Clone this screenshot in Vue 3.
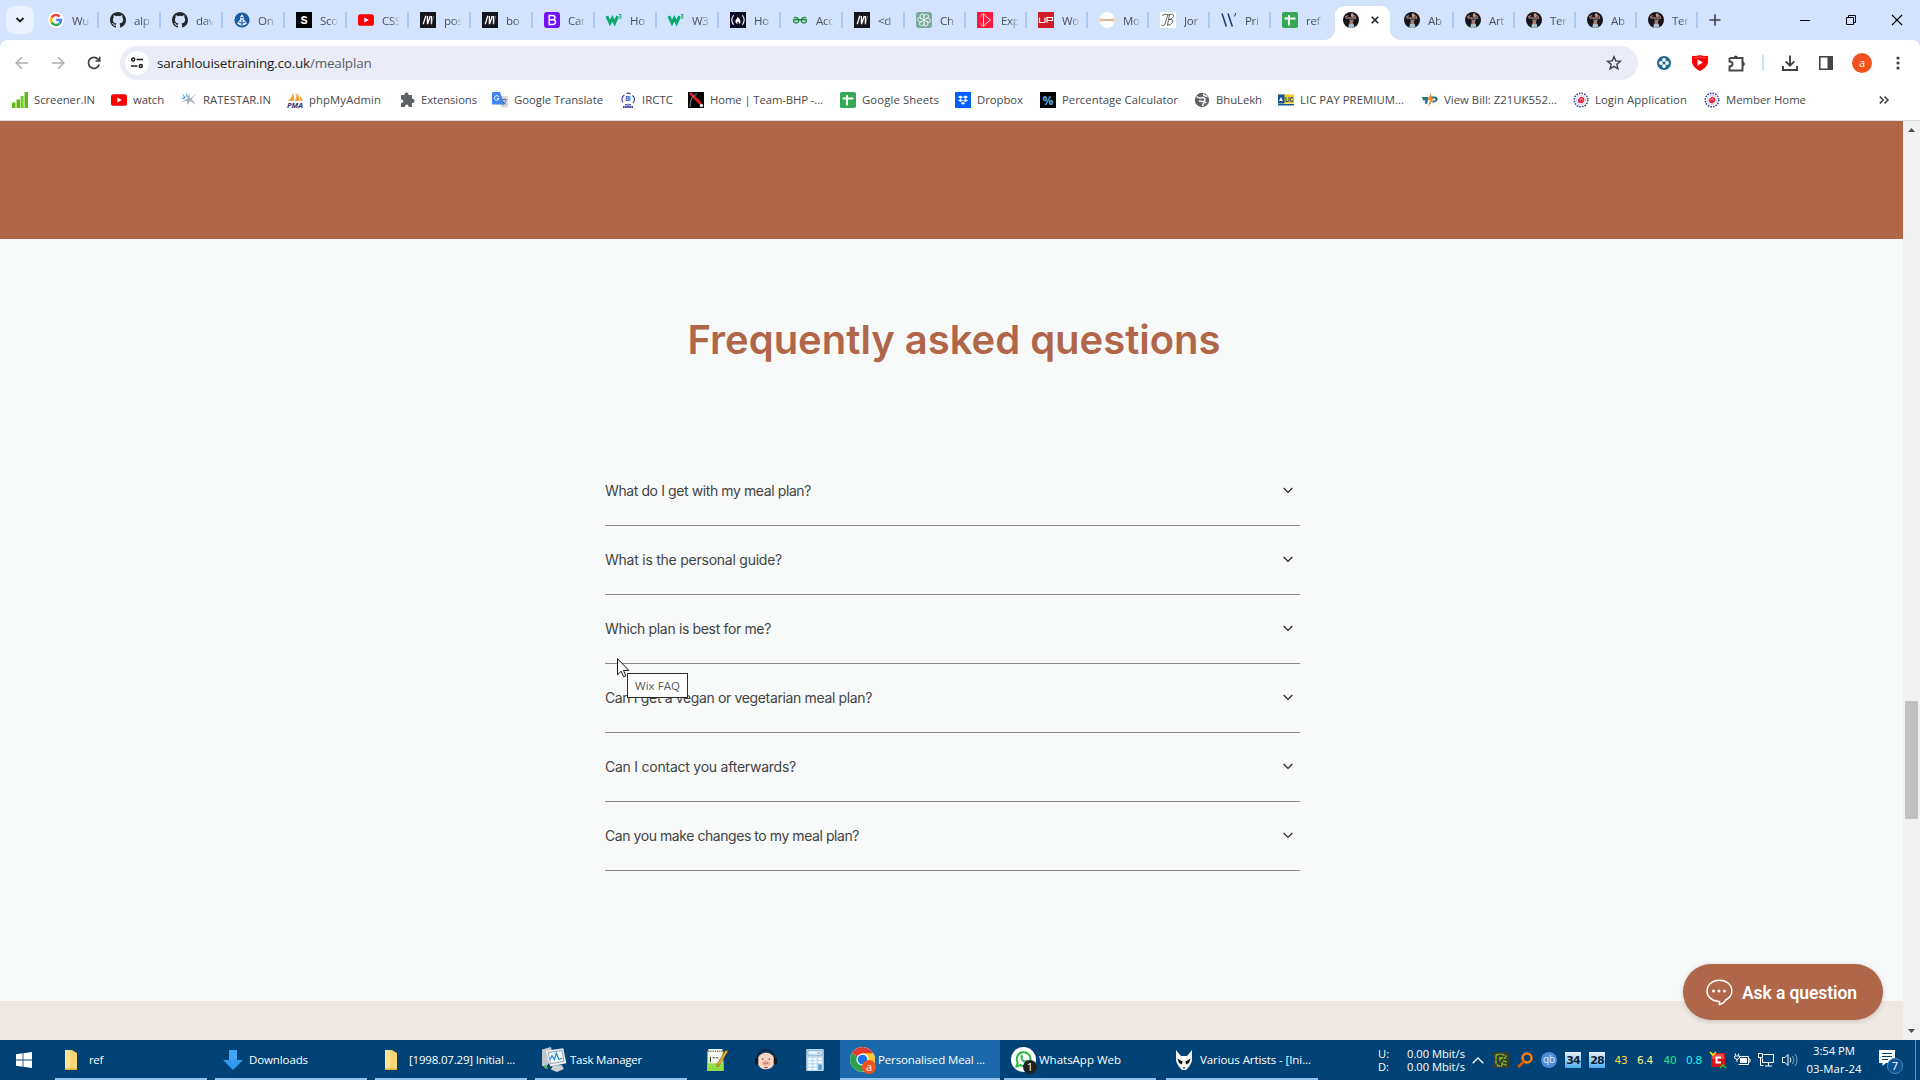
<script setup>
const petal = '<path d="M7.900 7.900V4.700q.3-2.300 2.500-2.300 2.300.2 2.500 2.500L9.900 6.700" transform="rotate(ANGLE 8 8)"/>'
const petals = [0, 60, 120, 180, 240, 300].map((a) => petal.replace('ANGLE', a)).join('')

const icons = {
  google: '<circle cx="8" cy="8" r="8" fill="#fff"/><g fill="none" stroke-width="2.5"><path d="M11.6 4.6A5 5 0 0 0 3.7 5.5" stroke="#ea4335"/><path d="M3.7 5.5a5 5 0 0 0 0 5" stroke="#fbbc05"/><path d="M3.7 10.5a5 5 0 0 0 7.6 1.2" stroke="#34a853"/><path d="M11.3 11.7A5 5 0 0 0 13 8.1H8.2" stroke="#4285f4"/></g>',
  github: '<path fill="#24292f" d="M8 0C3.58 0 0 3.58 0 8c0 3.54 2.29 6.53 5.47 7.59.4.07.55-.17.55-.38 0-.19-.01-.82-.01-1.49-2.01.37-2.53-.49-2.69-.94-.09-.23-.48-.94-.82-1.13-.28-.15-.68-.52-.01-.53.63-.01 1.08.58 1.23.82.72 1.21 1.87.87 2.33.66.07-.52.28-.87.51-1.07-1.78-.2-3.64-.89-3.64-3.95 0-.87.31-1.59.82-2.15-.08-.2-.36-1.02.08-2.12 0 0 .67-.21 2.2.82a7.6 7.6 0 0 1 4 0c1.53-1.04 2.2-.82 2.2-.82.44 1.1.16 1.92.08 2.12.51.56.82 1.27.82 2.15 0 3.07-1.87 3.75-3.65 3.95.29.25.54.73.54 1.48 0 1.07-.01 1.93-.01 2.2 0 .21.15.46.55.38A8 8 0 0 0 8 0"/>',
  octo: '<circle cx="8" cy="8" r="7.6" fill="#1a5ca0"/><path d="M8 2.300c1.800 1.500 2 3.200 1.800 5L13 11.500q-2 2-5 2t-5-2l3.200-4.200C6 5.500 6.200 3.800 8 2.300" fill="#dbe9f6"/><path d="M6.800 5.500h2.400M8 7.500v5.500M5 10.200q3 2 6 0" stroke="#1a5ca0" fill="none"/>',
  sblack: '<path fill="#000" d="M0 0h16v16H0z"/><text x="8" y="12" text-anchor="middle" font-size="11" font-weight="700" font-family="Inter,sans-serif" fill="#fff">S</text>',
  youtube: '<rect y="2.200" width="16" height="11.600" rx="2.600" fill="#f00"/><path d="M6.300 5.400v5.200L10.800 8z" fill="#fff"/>',
  mdark: '<path fill="#15141a" d="M0 0h16v16H0z"/><path d="M3.200 12.200 5.800 3.800M7.400 12.200V4M7.600 12 10.200 4M11.400 12.200V4" stroke="#fff" stroke-width="1.300" fill="none"/><path d="m11.600 12 1.900-8" stroke="#aaa" stroke-width=".7"/>',
  bootstrap: '<rect width="16" height="16" rx="3" fill="#7411f5"/><path d="M5.200 3.600h3.600a2.100 2.100 0 0 1 0 4.200H5.200zm0 4.200h4a2.300 2.300 0 0 1 0 4.600h-4z" fill="none" stroke="#fff" stroke-width="1.500"/>',
  w3: '<path d="M.8 4.200 4 11 6.300 6.300 8.600 11 11.600 4.200" fill="none" stroke="#04aa6d" stroke-width="2.900"/><path d="M12.900 2.600h2.300L13.800 4.400q1.700 0 1.500 1.200-.5 1.200-2.500.6" fill="none" stroke="#04aa6d" stroke-width=".9"/>',
  fcc: '<path fill="#0a0a23" d="M0 0h16v16H0z"/><path d="M3.600 3.200Q.1 8 3.600 12.800M12.400 3.200q3.500 4.800 0 9.600" stroke="#fff" stroke-width="1.100" fill="none"/><path d="M7.500 4.400c1 1.500 3 2.800 3 5 0 1.400-.9 2.200-1.900 2.500.5-1.100.3-1.700-.7-2.700-.5 1-.9 1.600-.4 2.700-1.500-.5-2.100-1.500-2.100-2.600 0-2.200 2.400-2.600 2.100-4.900" fill="#fff"/>',
  gfg: '<g fill="none" stroke="#2f8d46" stroke-width="1.400"><path d="M1 7.800h14M7 7.800q-.3 3.200-2.900 3.200-2.600-.2-2.600-2.700M9 7.800q.3 3.200 2.900 3.200 2.600-.2 2.600-2.700"/><path d="M1.800 6.200q1.800-2.200 5.200 1.600M14.200 6.200q-1.800-2.200-5.200 1.600"/></g>',
  gpt: '<rect width="16" height="16" rx="3" fill="#75a99a"/><g fill="none" stroke="#fff" stroke-width=".8">' + petals + '</g>',
  expo: '<path fill="#ff1a3d" d="M0 0h16v16H0z"/><path d="M6.500 2.500v11M4.500 3l1.800-1.300L8 3M4.500 13l1.800 1.300L8 13M8 3.500l5.500 4.500L8 12.500M4 3.500v1M4 11.500v1" stroke="#fff" stroke-width=".9" fill="none"/>',
  up: '<path fill="#d01c24" d="M0 0h16v16H0z"/><path d="M1.500 5.500v5H7M7 5.500v5M9 10.800V5.500h5.500v3H9.500" stroke="#fff" stroke-width="1.200" fill="none"/>',
  mo: '<circle cx="8" cy="8" r="8" fill="#fff"/><path d="M2 8h12" stroke="#cc9277" stroke-width="1.400"/><rect x=".5" y="6.200" width="2.300" height="3.600" rx="1" fill="#ffb98a"/><rect x="13.200" y="6.200" width="2.300" height="3.600" rx="1" fill="#ffb98a"/>',
  jb: '<path fill="#fff" d="M0 0h16v16H0z"/><path d="M2 3.500Q5 1.500 8 2.500 6.500 7 5 12q-1.500 3-3.500 1M9.500 2.500 7.500 13M8 3q6-2 5.500 1.500Q12.500 7 9 7.500q5-.5 3.500 3-1.500 3-5.500 2.700" fill="none" stroke="#555" stroke-width=".9"/>',
  wslash: '<path d="m1 1.500 4.300 13M7 1.500l4.300 13" stroke="#18396b" stroke-width="1.500"/><path d="m14.800 1-1.300 3.500" stroke="#18396b"/>',
  sheets: '<rect width="16" height="16" rx="1.800" fill="#34a853"/><path d="M7 3v10.500M2.500 6.500h11" stroke="#fff" stroke-width="1.900"/>',
  photo: '<circle cx="8" cy="8" r="8" fill="#15151b"/><path d="M7.500 5.600 3.500 6.300 2.600 4.800 5 3.600M9.500 5.500l3 1-.2-2-2-1.500" stroke="#a8796c" stroke-width="1.200" fill="none"/><path d="M8 1.500h2.200l.5 3-1.500 1.200L7.800 4z" fill="#c69a8a"/><path d="M6 5.800 10.500 5.500 10.800 8 9.800 10l.8 2.500H6L6.800 9.800z" fill="#a97f75"/><path d="m6.200 6.600 4.300-.2.100 1.600-4 .2z" fill="#3d4c5e"/><path d="M6 12h4.700l.8 3.200-3.500.8-2.800-.5z" fill="#a9bfce"/>',
  screener: '<path d="M0 10.500h3.500V16H0zM4.500 7.500H8V16H4.500z" fill="#61b515"/><path d="M8.500 4h3.200v12H8.500z" fill="#74cc21"/><path d="M12.500 0H16v16h-3.500z" fill="#61b515"/>',
  ratestar: '<path d="m.5 9.500 6-3 2-5 .5 5 6.500-5-5 5.500 4.500 6-6-4-2.500 4-.5-4z" fill="#aab0b7"/><path d="m1 1 3.500 4.500L3 7l-3-.5 3-1zM5 .5l2 4-1.500 1z" fill="#3798dc"/>',
  pma: '<path d="M1 9Q5 6 5.500 1 8 5 7 9zM7.500 9q2.500-3 2-8.500 3.500 4 2.500 8.500zM12.500 8.500q1-2 0-4.500 3 2 3.500 4.500z" fill="#f7a13b"/><text x="0" y="15.500" font-size="6.500" textLength="16" lengthAdjust="spacingAndGlyphs" font-weight="700" font-style="italic" font-family="Open Sans" fill="#343471">PMA</text>',
  puzzle: '<path d="M2 3h3.500V2.500a2 2 0 0 1 4 0V3H13v3.800h.5a2 2 0 0 1 0 4.200H13v4H9.500v-.7a1.700 1.700 0 0 0-3.400 0v.7H2v-4h.6a1.800 1.800 0 0 0 0-3.600H2z" fill="#5f6368"/>',
  translate: '<path d="M7 4h8q1 0 1 1v9.500q0 1-1 1H9z" fill="#d8dce1"/><path d="M1 0h7l4.500 12.500H1q-1 0-1-1V1q0-1 1-1" fill="#4285f4"/><path d="M6.700 4.700A2.300 2.300 0 1 0 7 6.500H5" fill="none" stroke="#fff"/><path d="M9.800 7.500h5M12.200 6.500v1M10.500 8.500q.8 2.500 3.800 4M14 8q-.5 3-3.500 5" stroke="#668" stroke-width=".9" fill="none"/>',
  irctc: '<path d="M4.500 3A5 5 0 0 0 3 10.500M12.500 3.500a5 5 0 0 1 .5 7.500M5 12.500q3 1 6 0M6.500 1.500q2-1 4 .5" fill="none" stroke="#32399a" stroke-width="1.100"/><text x="8" y="9" text-anchor="middle" font-size="5.500" font-weight="700" font-family="Inter" fill="#32399a">BI</text><path d="M3 15h10.500" stroke="#32399a" stroke-width="1.800" stroke-dasharray="1.600 .5"/>',
  bhp: '<path d="M0 0h16v16H0z"/><path d="m2 1 11 11" stroke="#d81c1c" stroke-width="3"/><path d="M9 2Q2 4 2 15" stroke="#998f8a" fill="none"/><circle cx="13.500" cy="13.500" r="1.700" fill="#eee"/>',
  dropbox: '<path fill="#0061fe" d="M0 0h16v16H0z"/><path d="m5.500 3.500 2.500 1.600-2.500 1.600L3 5.100zm5 0L13 5.100l-2.500 1.600L8 5.100zm-5 3.400L8 8.500l-2.500 1.600L3 8.500zm5 0L13 8.500l-2.500 1.600L8 8.500zM8 9.800l2.300 1.500L8 12.800l-2.300-1.500z" fill="#fff"/>',
  percent: '<path d="M0 0h16v16H0z"/><text x="2.500" y="12.700" font-size="13" font-weight="700" textLength="11" lengthAdjust="spacingAndGlyphs" font-family="Open Sans" fill="#4aacec">%</text>',
  globe: '<circle cx="8" cy="8" r="7.200" fill="#5f6368"/><path d="M2.500 4.500Q6 7 8 5.500q3 0 3 2.500-1 2-3 1.500l-3-.5M9.500 1.500l.5 2 3.500 1M8.500 14l1-3 3-1" fill="none" stroke="#fff" stroke-width="1.500"/>',
  lic: '<path d="M0 2.500h16v9H0z" fill="#f5cf16"/><path d="M0 2.500h6.500v9H0zM0 12h16v1.500H0z" fill="#175595"/><path d="m1 9 2-4 2 4z" fill="#fff"/><text x="7" y="9.700" font-size="6.500" textLength="8.500" lengthAdjust="spacingAndGlyphs" font-weight="800" font-family="Inter" fill="#165089">LIC</text>',
  bill: '<path d="M0 5h6.500L5 12q-3.500 0-1.500-3.500H1zM9 4.500h4.500q3.500 1 1.500 4.500-2 2-5 1.500l1-2h2.500l-.5-2H8.500z" fill="#26718c"/><path d="m9 1-3.500 7H8l-2 7.500L12 6H9.500z" fill="#f78a23"/>',
  epf: '<circle cx="8" cy="8" r="6.800" fill="#fff" stroke="#29398c" stroke-width="1.500" stroke-dasharray="1.500 1.200"/><circle cx="8" cy="8" r="4.800" fill="#fff" stroke="#bcc5e5" stroke-width=".8"/><path d="m8 4.500 3.200 1.500.3 3-2.500 2.500-3.500-.8-1-3z" fill="#e72943"/><path d="m6.500 8 2-1.500 1 2" stroke="#fff" stroke-width=".6" fill="none"/>',
  folder: '<path d="M3 0h7l5 3v17H3z" fill="#f3cb5c"/><path d="M3 0h4l2 2v18H3z" fill="#fbe294"/><path d="M8 3h7v17H8z" fill="#f8d775"/><path d="M3 18.500h12V20H3z" fill="#e3b543"/>',
  down: '<path d="M6 0h8v10h6L10 20 0 10h6z" fill="#3198f0"/><path d="M6 0h8v10h-8z" fill="#44a4f4"/>',
  taskmgr: '<path d="M0 2l7-2 3 8-7 8-3-1z" fill="#bfc7cd"/><path d="m3 3 14-2 2.500 12-13 2.500z" fill="#e8edf0"/><path d="m5 4.500 11-1.700 1.500 8.500-10.500 2z" fill="#f4fafe" stroke="#7c8b96" stroke-width=".6"/><path d="m6.500 10 1.500-3 2 3 1.500-5 2 5 2.500-1" stroke="#258cd0" fill="none"/><path d="M9 14.500h7l1.500 3-5.500 2.500-5-2z" fill="#ccd1d4"/><path d="M1 15.500 3 14l2 3-2 .5z" fill="#58b34c"/>',
  npp: '<path d="M1 2h15v17H1z" fill="#8bd33c"/><path d="M2 0h13v14H2z" fill="#f5f7ee"/><path d="M4 7v5M6 8h2M9 8h2" stroke="#3c4a32"/><path d="M2 2h13" stroke="#59634f" stroke-width="1.500" stroke-dasharray="1 1"/><path d="M1 13h15v7H1z" fill="#94da44"/><path d="m18 1 2 1-8 13-2 1 .3-2.500z" fill="#f1ae32" stroke="#614219" stroke-width=".5"/>',
  face: '<path d="M2 9a8 8 0 0 1 16 0" fill="none" stroke="#16202c" stroke-width="1.700"/><ellipse cx="10" cy="11" rx="8" ry="7.500" fill="#f8d4c2"/><path d="M0 8h3v6H0zM17 8h3v6h-3z" fill="#121922"/><ellipse cx="10" cy="13" rx="3.500" ry="2.300" fill="#efac9d"/><path d="M7 8.500v1.500M13 8.500v1.500M9 12.500v1M11 12.500v1M8.500 16.800h3" stroke="#744a43"/>',
  calc: '<rect x="2" width="16" height="20" rx="1" fill="#bad9ee"/><path d="M3.500 1.500h13v4h-13z" fill="#eaf6fc" stroke="#6fa2c4" stroke-width=".7"/><path d="M12 3.500h3" stroke="#6f9cbb"/><g fill="#fff"><path d="M4 8h3v2H4zM8.500 8h3v2h-3zM4 11h3v2H4zM8.500 11h3v2h-3zM4 14h3v2H4zM8.500 14h3v2h-3zM4 17h3v2H4zM8.500 17h3v2h-3zM13 8h3v2h-3zM13 11h3v2h-3z"/></g><path d="M13 14h3v5h-3z" fill="#4e9bd0"/>',
  chrome: '<circle cx="10" cy="10" r="10" fill="#fff"/><path d="M10 10 1.340 5A10 10 0 0 1 18.660 5z" fill="#e33b2e"/><path d="M10 10V5h8.660A10 10 0 0 1 10 20z" fill="#fcc934"/><path d="m10 10 4.300 2.500L10 20A10 10 0 0 1 1.340 5z" fill="#2da04e"/><circle cx="10" cy="10" r="4.900" fill="#fff"/><circle cx="10" cy="10" r="3.900" fill="#1a73e8"/>',
  whatsapp: '<circle cx="10" cy="10" r="10" fill="#fff"/><path d="m4.500 15.500.9-3a5.500 5.500 0 1 1 2.100 2z" fill="#fff" stroke="#2bb741" stroke-width="1.600"/><path d="M7.600 6.500 8.800 6l.9 2-.7 1q.8 1.400 2.200 2l1-.8 1.700 1q0 1.800-2 1.800Q7 11.500 7.600 6.500" fill="#2bb741"/>',
  foobar: '<path d="M2 0 7 6h6l5-6v11l-2.500 5L12 20H8l-3.500-4L2 11z" fill="#fff"/><path d="m3.500 8.500 5 3-.5 3-3-1.500zM16.500 8.500l-5 3 .5 3 3-1.500z" fill="#111"/><path d="m8.500 17.500 1.500 1.700 1.500-1.700z" fill="#111"/>'
}

const tabs = [
  ['google', 'Wu', 62], ['github', 'alp', 62], ['github', 'dav', 62], ['octo', 'On', 62], ['sblack', 'Sco', 62],
  ['youtube', 'CSS', 62], ['mdark', 'pos', 62], ['mdark', 'bo', 62], ['bootstrap', 'Car', 62], ['w3', 'Ho', 62],
  ['w3', 'W3', 62], ['fcc', 'Ho', 62], ['gfg', 'Acc', 62], ['mdark', '<d', 62], ['gpt', 'Ch', 61], ['expo', 'Exp', 61],
  ['up', 'Wo', 61], ['mo', 'Mo', 61], ['jb', 'Jor', 61], ['wslash', 'Pri', 61], ['sheets', 'ref', 61], ['photo', '', 61],
  ['photo', 'Ab', 61], ['photo', 'Art', 61], ['photo', 'Ter', 61], ['photo', 'Ab', 61], ['photo', 'Ter', 61]
].map(([icon, label, width]) => ({ icon, label, width, active: !label }))

// icon, label, label width, distance to the next bookmark
const bookmarks = [
  ['screener', 'Screener.IN', 61, 99], ['youtube', 'watch', 31, 70], ['ratestar', 'RATESTAR.IN', 68, 106], ['pma', 'phpMyAdmin', 72, 112],
  ['puzzle', 'Extensions', 56, 93], ['translate', 'Google Translate', 89, 128], ['irctc', 'IRCTC', 31, 68], ['bhp', 'Home | Team-BHP -...', 113, 152],
  ['sheets', 'Google Sheets', 77, 115], ['dropbox', 'Dropbox', 46, 85], ['percent', 'Percentage Calculator', 116, 154], ['globe', 'BhuLekh', 46, 84],
  ['lic', 'LIC PAY PREMIUM...', 104, 144], ['bill', 'View Bill: Z21UK552...', 113, 151], ['epf', 'Login Application', 92, 131], ['epf', 'Member Home', 80, 120]
].map(([icon, label, width, pitch]) => ({ icon, label, width, pitch }))

const questions = [
  ['What do I get with my meal plan?', 206], ['What is the personal guide?', 177], ['Which plan is best for me?', 166],
  ['Can I get a vegan or vegetarian meal plan?', 267], ['Can I contact you afterwards?', 191], ['Can you make changes to my meal plan?', 254]
].map(([text, width]) => ({ text, width }))

const tasks = [
  { icon: 'folder', label: 'ref', width: 14 }, { icon: 'down', label: 'Downloads', width: 59 },
  { icon: 'folder', label: '[1998.07.29] Initial ...', width: 106 }, { icon: 'taskmgr', label: 'Task Manager', width: 72, big: true }
]
const apps = [
  { icon: 'chrome', label: 'Personalised Meal ...', width: 107, big: true, active: true, badge: 'a' },
  { icon: 'whatsapp', label: 'WhatsApp Web', width: 82, big: true, badge: '1' },
  { icon: 'foobar', label: 'Various Artists - [Ini...', width: 111 }
]

// Spreads a label's letters so that it fills the given width.
const vFit = {
  mounted(el, { value }) {
    const natural = el.getBoundingClientRect().width
    el.style.letterSpacing = (value - natural) / el.textContent.length + 'px'
  }
}
</script>

<template>
  <div class="screen">
    <header class="tabstrip">
      <div class="tab-search"><svg width="10" height="6" viewBox="0 0 10 6"><path d="m1.500 1 3.500 3.500L8.500 1" fill="none" stroke="#1f1f1f" stroke-width="1.800" /></svg></div>
      <div v-for="(t, i) in tabs" :key="i" class="tab" :class="{ active: t.active, short: i === 20 || t.active }" :style="{ width: t.width + 'px' }">
        <svg class="i16" viewBox="0 0 16 16" v-html="icons[t.icon]"></svg>
        <span v-if="!t.active" class="tab-label">{{ t.label }}</span>
        <svg v-else class="tab-close" width="8" height="8" viewBox="0 0 8 8"><path d="m.7.7 6.600 6.600M7.300.7.7 7.300" stroke="#222" stroke-width="1.600" /></svg>
      </div>
      <svg class="plus" width="12" height="12" viewBox="0 0 12 12"><path d="M6 .5v11M.5 6h11" stroke="#3c4043" stroke-width="1.600" /></svg>
      <div class="winbtns">
        <svg width="10" height="10"><path d="M0 5.500h10" stroke="#000" /></svg>
        <svg width="10" height="10"><path d="M.5 2.500h7v7h-7zM2.500 2.500v-2h7v7h-2" fill="none" stroke="#000" /></svg>
        <svg width="10" height="10"><path d="m0 0 10 10M10 0 0 10" stroke="#000" stroke-width="1.100" /></svg>
      </div>
    </header>

    <div class="chrome">
      <div class="toolbar">
        <svg class="nav" width="14" height="14" viewBox="0 0 14 14"><path d="M13 7H1.500M7 1.200 1.200 7 7 12.800" fill="none" stroke="#a9abae" stroke-width="1.500" /></svg>
        <svg class="nav" width="14" height="14" viewBox="0 0 14 14"><path d="M1 7h11.500M7 1.200 12.800 7 7 12.800" fill="none" stroke="#a9abae" stroke-width="1.500" /></svg>
        <svg class="nav" width="14" height="14" viewBox="0 0 14 14"><path d="M12.200 8.500A5.500 5.500 0 1 1 11 3.200l1.200 1.300M12.700.8v4.200H8.500" fill="none" stroke="#3c4043" stroke-width="1.700" /></svg>
        <div class="omnibox">
          <div class="site"><svg width="12" height="12" viewBox="0 0 12 12"><g fill="none" stroke="#1f1f1f" stroke-width="1.500"><circle cx="2.200" cy="2.600" r="1.500" /><path d="M5.500 2.600H12M0 9h6.500" /><circle cx="9.800" cy="9" r="1.500" /></g></svg></div>
          <span v-fit="214.500" class="url">sarahlouisetraining.co.uk<i>/mealplan</i></span>
          <svg class="star" width="16" height="16" viewBox="0 0 16 16"><path d="m8 1.700 1.800 4.200 4.600.4-3.500 3 1 4.500L8 11.400l-3.900 2.400 1-4.500-3.500-3 4.600-.4z" fill="none" stroke="#3c4043" stroke-width="1.400" /></svg>
        </div>
        <div class="actions">
          <svg width="14" height="14" viewBox="0 0 14 14"><circle cx="7" cy="7" r="7" fill="#216993" /><g fill="#fff"><circle cx="7" cy="4" r="1.900" /><circle cx="4" cy="7" r="1.900" /><circle cx="10" cy="7" r="1.900" /><circle cx="7" cy="10" r="1.900" /></g><circle cx="7" cy="7" r="1.300" fill="#216993" /></svg>
          <svg width="16" height="16" viewBox="0 0 16 16"><path d="M8 0q4 1.500 8 .8V7q-1 6-8 9-7-3-8-9V.8Q4 1.500 8 0" fill="#f00" /><path d="M2 2.500Q5 3 8 2q3 1 6 .5" fill="none" stroke="#ff6a6a" stroke-width=".8" /><path d="M5.500 4.200v6.500l5.500-3.200z" fill="#fff" /></svg>
          <svg width="17" height="17" viewBox="0 0 17 17"><path d="M1.500 3h13v4M1.500 3v3.500c4 .2 4 4.800 0 5V15.500h13v-3.500" fill="none" stroke="#474747" stroke-width="1.900" /><path d="M5.500 3q0-2.500 2.300-2.500T10 3zM14 6.700q2.800 0 2.800 2.400T14 11.600z" fill="#474747" /><path d="M14.500 6v6.500" stroke="#474747" stroke-width="1.900" /></svg>
          <b class="divider"></b>
          <svg width="16" height="16" viewBox="0 0 16 16"><path d="M8 .5v10M3.700 6.300 8 10.600l4.300-4.300M1 11v4h14v-4" fill="none" stroke="#3c4043" stroke-width="1.900" /></svg>
          <svg width="14" height="14" viewBox="0 0 14 14"><path d="M.8.8h12.400v12.400H.8z" fill="none" stroke="#3c4043" stroke-width="1.600" /><path d="M8.500 0H14v14H8.500z" fill="#474747" /></svg>
          <span class="avatar">a</span>
          <svg class="dots" width="4" height="14" viewBox="0 0 4 14"><g fill="#3c4043"><circle cx="2" cy="2" r="1.600" /><circle cx="2" cy="7" r="1.600" /><circle cx="2" cy="12" r="1.600" /></g></svg>
        </div>
      </div>
      <div class="bookmarks">
        <div v-for="b in bookmarks" :key="b.label" class="bookmark" :style="{ width: b.pitch + 'px' }">
          <svg class="i16" viewBox="0 0 16 16" v-html="icons[b.icon]"></svg>
          <span v-fit="b.width">{{ b.label }}</span>
        </div>
        <svg class="more" width="10" height="8" viewBox="0 0 10 8"><path d="m.8.600 3.500 3.400L.8 7.400M5.500.6 9 4 5.500 7.400" fill="none" stroke="#3c4043" stroke-width="1.500" /></svg>
      </div>
    </div>

    <div class="viewport">
      <main class="page">
        <section class="band"></section>
        <section class="faq">
          <h1><span v-fit="533">Frequently asked questions</span></h1>
          <ul>
            <li v-for="q in questions" :key="q.text">
              <span v-fit="q.width">{{ q.text }}</span>
              <svg width="10" height="7" viewBox="0 0 10 7"><path d="M.7 1 5 5.400 9.300 1" fill="none" stroke="#222" stroke-width="1.200" /></svg>
            </li>
          </ul>
        </section>
        <section class="cream"></section>
        <div class="tooltip"><span v-fit="45">Wix FAQ</span></div>
        <svg class="cursor" width="13" height="20" viewBox="0 0 13 20"><path d="M.5.700v16.100l3.700-3.600 2.400 5.600 2.300-1-2.400-5.400h5.300z" fill="#fff" stroke="#111" /></svg>
        <button class="ask">
          <svg width="27" height="27" viewBox="0 0 27 27"><path d="M13.500 1.200C6.500 1.200 1 5.700 1 12c0 5.500 4.500 10 12.500 10.500v3c3.500-1 5.500-3 6-4.500 4-2 6.300-5 6.300-9C25.800 5.700 20.500 1.200 13.500 1.200z" fill="none" stroke="#fff" stroke-width="1.500" /><g fill="#fff"><circle cx="7.500" cy="12" r="1.500" /><circle cx="13" cy="12" r="1.500" /><circle cx="18.500" cy="12" r="1.500" /></g></svg>
          <span v-fit="115" class="ask-label">Ask a question</span>
        </button>
      </main>
      <aside class="scrollbar">
        <svg width="7" height="4"><path d="M0 4 3.500 0 7 4z" fill="#505050" /></svg>
        <div class="thumb"></div>
        <svg width="7" height="4"><path d="M0 0h7L3.500 4z" fill="#505050" /></svg>
      </aside>
    </div>

    <footer class="taskbar">
      <svg class="start" width="16" height="16" viewBox="0 0 16 16"><path d="M0 2.200 6.600 1.300v6.200H0zM7.400 1.200 16 0v7.500H7.400zM0 8.400h6.600v6.300L0 13.800zM7.400 8.400H16V16l-8.600-1.200z" fill="#fff" /></svg>
      <div v-for="t in tasks" :key="t.label" class="task" :class="{ big: t.big }">
        <div class="ticon" :class="'t-' + t.icon"><svg viewBox="0 0 20 20" v-html="icons[t.icon]"></svg></div>
        <span v-fit="t.width">{{ t.label }}</span>
      </div>
      <div v-for="n in ['npp', 'face', 'calc']" :key="n" class="pin"><svg viewBox="0 0 20 20" v-html="icons[n]"></svg></div>
      <div v-for="t in apps" :key="t.label" class="task app" :class="{ big: t.big, active: t.active }">
        <div class="ticon"><svg viewBox="0 0 20 20" v-html="icons[t.icon]"></svg><em v-if="t.badge" :class="{ dark: t.badge === '1' }">{{ t.badge }}</em></div>
        <span v-fit="t.width">{{ t.label }}</span>
      </div>
      <div class="net">
        <div><span>U:</span><span v-fit="58">0.00 Mbit/s</span></div>
        <div><span>D:</span><span v-fit="58">0.00 Mbit/s</span></div>
      </div>
      <svg class="up" width="12" height="7"><path d="m.7 6.300 5.300-5.300 5.300 5.300" fill="none" stroke="#fff" stroke-width="1.300" /></svg>
      <div class="tray">
        <svg class="i16" viewBox="0 0 16 16"><path fill="#3a3a36" d="M0 0h16v16H0z" /><path d="m3 3 5-1 6 2.500M3 3v8l2 3h4M6 6h7M7 6v3M10 9l4 1M10 12l3 1v2M9 10v5" fill="none" stroke="#76c70b" stroke-width="1.300" stroke-dasharray="4 .8" /></svg>
        <svg class="i16" viewBox="0 0 16 16"><circle cx="10" cy="6" r="4.500" fill="none" stroke="#ff7f0e" stroke-width="2.500" /><path d="m7 9.500-6 5.500" stroke="#d65a05" stroke-width="3" /></svg>
        <svg class="i16" viewBox="0 0 16 16"><circle cx="8" cy="8" r="8" fill="#4d8ad6" /><text x="8" y="11" text-anchor="middle" font-family="Inter" font-size="10" fill="#d5e9ff">qb</text></svg>
        <span class="chip">34</span><span class="chip">28</span>
        <span class="stat s1">43</span><span class="stat s2">6.4</span><span class="stat s3">40</span><span class="stat s4">0.8</span>
        <svg class="i16" viewBox="0 0 16 16"><rect x="1" y="1" width="14" height="14" rx="1" fill="#d3141c" /><path d="M2 2h12v5H2z" fill="#ed4a4a" /><path d="M11 5.500H6.500v5H11" fill="none" stroke="#fff" stroke-width="2" /><path d="m0 0 3 3 3-3" stroke="#ffe500" stroke-width="1.700" fill="none" /><path d="m10 16 3-3 3 3" stroke="#20c520" stroke-width="1.700" fill="none" /></svg>
        <svg class="i16" viewBox="0 0 16 16"><path d="M5.500 4.500h9v8H4.500M14.500 7H16v3h-1.500" fill="none" stroke="#fff" /><path d="M6 6h7v5H6z" fill="#fff" /><path d="M1.500 1.500v2M4.500 1.500v2M.5 4h5v2q-2.500 3-5 0zM3 7v3" fill="none" stroke="#fff" /></svg>
        <svg class="i16" viewBox="0 0 16 16"><path d="M5.500 2.500h10v8h-11V6.500M7 14h7M10.500 11v3M.5 1.500h4v4h-4zM2.500 5.500v8h3" fill="none" stroke="#fff" /></svg>
        <svg class="i16" viewBox="0 0 16 16"><path d="M.5 5.500H3l3-3v11l-3-3H.5z" fill="none" stroke="#fff" /><path d="M8 5.500q1.800 2.500 0 5" fill="none" stroke="#fff" /><path d="M10.500 4q3 4 0 8M13 2q4 6 0 12" fill="none" stroke="#7d9fba" /></svg>
      </div>
      <div class="clock"><span v-fit="42">3:54 PM</span><span v-fit="55">03-Mar-24</span></div>
      <div class="notif"><svg width="24" height="24" viewBox="0 0 24 24"><path d="M0 0h16v13H7l-3.500 3v-3H0z" fill="#fff" /><path d="M3 3.500h10M3 6.500h10M3 9.500h6" stroke="#004275" /><circle cx="16" cy="16" r="7.600" fill="#0b5394" stroke="#4b86b5" /><text x="16" y="20" text-anchor="middle" font-family="Open Sans" font-size="11" fill="#fff">7</text></svg></div>
    </footer>
  </div>
</template>

<style>
body { overflow: hidden; }
</style>

<style scoped>
* { box-sizing: border-box; }
.screen { width: 1920px; height: 1080px; display: flex; flex-direction: column; font: 12px "Open Sans", "Noto Sans", sans-serif; overflow: hidden; white-space: nowrap; }
svg { display: block; flex: none; overflow: visible; }
.i16 { width: 16px; height: 16px; }
.tabstrip { height: 40px; background: #d3e2fd; display: flex; align-items: center; flex: none; }
.tab-search { width: 28px; height: 28px; margin: 0 3px 0 6px; border-radius: 9px; background: #ebf1fe; display: flex; align-items: center; justify-content: center; }
.tab { height: 16px; padding-left: 11px; display: flex; align-items: center; gap: 8px; border-right: 2px solid #a8c7fa; flex: none; }
.tab.short { border-right-color: transparent; }
.tab-label { width: 17px; overflow: hidden; font-size: 11.500px; letter-spacing: -.3px; color: #4b5057; -webkit-mask-image: linear-gradient(90deg, #000 50%, rgba(0, 0, 0, .15)); mask-image: linear-gradient(90deg, #000 50%, rgba(0, 0, 0, .15)); }
.tab.active { position: relative; height: 34px; margin-top: 6px; border: 0; padding-left: 11px; gap: 12px; z-index: 0; }
.tab.active::before { content: ""; position: absolute; z-index: -1; left: 3px; right: 3px; top: 0; bottom: 0; background: #fff; border-radius: 9px 9px 0 0; }
.tab.active::after { content: ""; position: absolute; z-index: -1; left: -7px; right: -7px; bottom: 0; height: 10px; background: radial-gradient(circle at 0 0, transparent 9.500px, #fff 10px) left / 10px 10px no-repeat, radial-gradient(circle at 100% 0, transparent 9.500px, #fff 10px) right / 10px 10px no-repeat; }
.tab.active svg { margin-top: -6px; }
.plus { margin-left: 11px; }
.winbtns { display: flex; gap: 36px; margin-left: auto; margin-right: 18px; }
.chrome { height: 81px; flex: none; background: linear-gradient(#d3e2fd 10px, #fff 10px); border-bottom: 1px solid #dadce0; }
.toolbar { height: 46px; padding: 6px 20px 6px 15px; background: #fff; border-radius: 8px 8px 0 0; display: flex; align-items: center; }
.nav { margin-right: 22px; }
.nav:nth-child(3) { margin-right: 18px; }
.omnibox { width: 1518px; height: 34px; margin-left: 1px; border-radius: 17px; background: #eaedf8; display: flex; align-items: center; padding: 0 16px 0 5px; }
.site { width: 24px; height: 24px; border-radius: 50%; background: #fff; display: flex; align-items: center; justify-content: center; margin-right: 8px; }
.url { font-size: 13.500px; color: #1f1f1f; }
.url i { font-style: normal; color: #5a5e63; }
.star { margin-left: auto; }
.actions { display: flex; align-items: center; margin-left: 19px; }
.actions svg:nth-child(2) { margin-left: 21px; }
.actions svg:nth-child(3) { margin-left: 20px; }
.divider { width: 2px; height: 16px; background: #cfe0fc; margin: 0 18px 0 17px; }
.actions svg:nth-child(6) { margin-left: 21px; }
.avatar { width: 20px; height: 20px; margin-left: 19px; border-radius: 50%; background: #f4511e; color: #fff; text-align: center; font-size: 11px; line-height: 19px; }
.dots { margin-left: 24px; }
.bookmarks { height: 28px; display: flex; align-items: center; padding-left: 12px; color: #45484c; }
.bookmark { display: flex; align-items: center; gap: 6px; flex: none; font-size: 11.300px; line-height: 16px; padding-bottom: 1px; }
.more { margin-left: auto; margin-right: 31px; }
.viewport { height: 919px; display: flex; flex: none; }
.page { width: 1903px; position: relative; display: flex; flex-direction: column; background: #f8faf9; }
.band { height: 118px; background: #af6649; }
.faq { height: 762px; padding-top: 71px; }
h1 { margin: 0; text-align: center; padding-left: 5px; font: 600 40px/60px Inter, sans-serif; color: #af6649; }
ul { list-style: none; width: 695px; margin: 87px 0 0 605px; padding: 0; }
li { height: 69px; border-bottom: 1px solid #8b8888; display: flex; align-items: center; justify-content: space-between; padding: 0 7px 1px 0; font: 14px Inter, sans-serif; color: #414343; }
.cream { height: 39px; background: #efe7e2; }
.tooltip { position: absolute; left: 627px; top: 552px; width: 61px; height: 25px; border: 1px solid #2b2b2b; background: #fff; font-size: 11.500px; line-height: 23px; padding-left: 7px; color: #575757; }
.cursor { position: absolute; left: 617px; top: 537px; }
.ask { position: absolute; left: 1683px; top: 843px; width: 200px; height: 56px; border: 0; border-radius: 28px; background: #af6649; color: #fff; display: flex; align-items: center; gap: 9px; padding: 0 0 0 23px; font: 600 17.500px Roboto, sans-serif; box-shadow: 0 1px 5px rgba(0, 0, 0, .18); }
.ask-label { padding-top: 2px; }
.scrollbar { width: 17px; background: #f1f1f1; display: flex; flex-direction: column; align-items: center; padding: 7px 0; }
.thumb { width: 13px; height: 118px; margin: 569px 0 auto; background: #c1c1c1; }
.taskbar { height: 40px; background: #004275; color: #fff; display: flex; align-items: center; position: relative; }
.start { margin: 0 23px 0 16px; }
.task { width: 152px; height: 40px; margin-right: 8px; flex: none; display: flex; align-items: center; border-bottom: 2px solid #91c2ec; padding: 1px 0 0 8px; gap: 6px; font-size: 11.500px; }
.task .ticon { width: 20px; flex: none; position: relative; }
.task.big { padding-left: 7px; gap: 3px; }
.task.big .ticon { width: 25px; }
.ticon svg { width: 100%; }
.t-folder svg { margin-left: -1px; }
.ticon em { position: absolute; right: -1px; bottom: -2px; width: 14px; height: 14px; border-radius: 50%; background: #f4511e; font: 11px/13px "Open Sans", sans-serif; text-align: center; }
.ticon em.dark { background: #202124; }
.pin { width: 49px; display: flex; justify-content: center; flex: none; position: relative; left: -3px; }
.pin svg { width: 22px; height: 22px; }
.app { margin-right: 9px; }
.app.active { width: 160px; background: #1b69a8; padding-left: 10px; margin: 0 4px 0 -2px; }
.app:not(.active).big { padding-left: 7px; margin-right: 10px; }
.net { width: 87px; margin-left: 51px; font-size: 11.200px; line-height: 13px; }
.net div { display: flex; justify-content: space-between; }
.up { margin: 0 9px 0 7px; }
.tray { display: flex; align-items: center; gap: 8px; }
.chip { width: 16px; height: 16px; background: linear-gradient(#e8f1fb, #4badf0); color: #102035; font: 700 11px/18px "DejaVu Sans", sans-serif; letter-spacing: -.8px; text-align: center; }
.stat { font: 10.500px "DejaVu Sans", sans-serif; letter-spacing: -.3px; width: 16px; flex: none; text-align: center; }
.s1 { color: #ffd83c; }
.s2 { color: #fff68a; }
.s3 { color: #29e68c; margin-left: 1px; }
.s4 { color: #2ef2ea; }
.clock { width: 72px; display: flex; flex-direction: column; align-items: center; line-height: 18.500px; font-size: 11.300px; }
.notif { margin-left: 9px; padding-top: 3px; }
.taskbar::after { content: ""; position: absolute; right: 4px; top: 0; width: 1px; height: 40px; background: #6b91b0; }
</style>
